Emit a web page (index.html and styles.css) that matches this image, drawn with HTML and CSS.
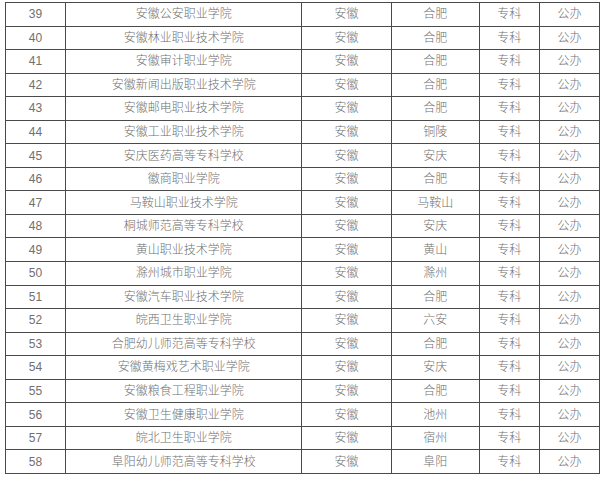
FILE: index.html
```html
<!DOCTYPE html>
<html lang="zh">
<head>
<meta charset="utf-8">
<link rel="stylesheet" href="styles.css">
</head>
<body>
<div class="wrap">
<table class="list">
<colgroup>
<col class="c-no"><col class="c-name"><col class="c-prov"><col class="c-city"><col class="c-lvl"><col class="c-type">
</colgroup>
<tbody>
<tr><td>39</td><td>安徽公安职业学院</td><td>安徽</td><td>合肥</td><td>专科</td><td>公办</td></tr>
<tr><td>40</td><td>安徽林业职业技术学院</td><td>安徽</td><td>合肥</td><td>专科</td><td>公办</td></tr>
<tr><td>41</td><td>安徽审计职业学院</td><td>安徽</td><td>合肥</td><td>专科</td><td>公办</td></tr>
<tr><td>42</td><td>安徽新闻出版职业技术学院</td><td>安徽</td><td>合肥</td><td>专科</td><td>公办</td></tr>
<tr><td>43</td><td>安徽邮电职业技术学院</td><td>安徽</td><td>合肥</td><td>专科</td><td>公办</td></tr>
<tr><td>44</td><td>安徽工业职业技术学院</td><td>安徽</td><td>铜陵</td><td>专科</td><td>公办</td></tr>
<tr><td>45</td><td>安庆医药高等专科学校</td><td>安徽</td><td>安庆</td><td>专科</td><td>公办</td></tr>
<tr><td>46</td><td>徽商职业学院</td><td>安徽</td><td>合肥</td><td>专科</td><td>公办</td></tr>
<tr><td>47</td><td>马鞍山职业技术学院</td><td>安徽</td><td>马鞍山</td><td>专科</td><td>公办</td></tr>
<tr><td>48</td><td>桐城师范高等专科学校</td><td>安徽</td><td>安庆</td><td>专科</td><td>公办</td></tr>
<tr><td>49</td><td>黄山职业技术学院</td><td>安徽</td><td>黄山</td><td>专科</td><td>公办</td></tr>
<tr><td>50</td><td>滁州城市职业学院</td><td>安徽</td><td>滁州</td><td>专科</td><td>公办</td></tr>
<tr><td>51</td><td>安徽汽车职业技术学院</td><td>安徽</td><td>合肥</td><td>专科</td><td>公办</td></tr>
<tr><td>52</td><td>皖西卫生职业学院</td><td>安徽</td><td>六安</td><td>专科</td><td>公办</td></tr>
<tr><td>53</td><td>合肥幼儿师范高等专科学校</td><td>安徽</td><td>合肥</td><td>专科</td><td>公办</td></tr>
<tr><td>54</td><td>安徽黄梅戏艺术职业学院</td><td>安徽</td><td>安庆</td><td>专科</td><td>公办</td></tr>
<tr><td>55</td><td>安徽粮食工程职业学院</td><td>安徽</td><td>合肥</td><td>专科</td><td>公办</td></tr>
<tr><td>56</td><td>安徽卫生健康职业学院</td><td>安徽</td><td>池州</td><td>专科</td><td>公办</td></tr>
<tr><td>57</td><td>皖北卫生职业学院</td><td>安徽</td><td>宿州</td><td>专科</td><td>公办</td></tr>
<tr><td>58</td><td>阜阳幼儿师范高等专科学校</td><td>安徽</td><td>阜阳</td><td>专科</td><td>公办</td></tr>
</tbody>
</table>
</div>
</body>
</html>
```

FILE: styles.css
```css
html, body {
  margin: 0;
  padding: 0;
  background: #ffffff;
}
.wrap {
  padding: 2px 0 0 5px;
}
.list {
  border-collapse: collapse;
  table-layout: fixed;
  width: 595px;
  font-family: "Liberation Sans", "Noto Sans CJK SC", sans-serif;
  font-size: 12px;
  font-weight: 300;
  color: #707070;
}
.list td {
  border: 1px solid #4a4a4a;
  height: 22.55px;
  padding: 0;
  text-align: center;
  vertical-align: middle;
  line-height: 14px;
}
.c-no { width: 60px; }
.c-name { width: 236px; }
.c-prov { width: 89px; }
.c-city { width: 88px; }
.c-lvl { width: 60px; }
.c-type { width: 60px; }
```
